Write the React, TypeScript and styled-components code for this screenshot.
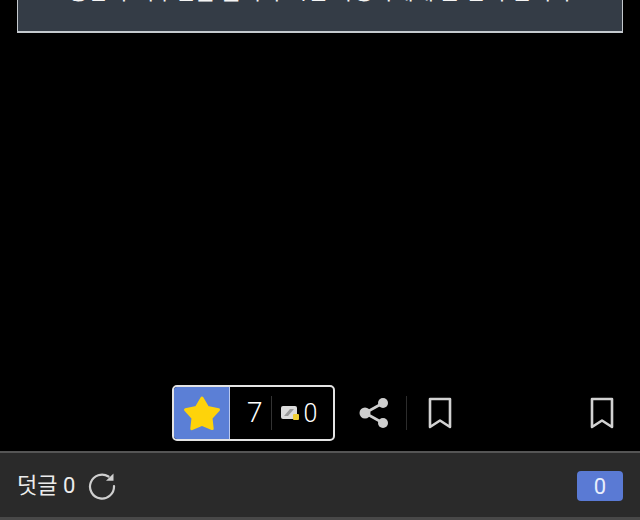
import { createGlobalStyle } from "styled-components";
import styled from "styled-components";

const Global = createGlobalStyle`
  html, body {
    margin: 0;
    padding: 0;
    background: #000;
  }
  body {
    font-family: Roboto, "Noto Sans CJK KR", sans-serif;
    overflow: hidden;
  }
`;

const Page = styled.div`
  width: 640px;
  height: 520px;
  display: flex;
  flex-direction: column;
  overflow: hidden;
  background: #000;
`;

const Notice = styled.div`
  height: 33px;
  margin: 0 17px;
  box-sizing: border-box;
  border: 1px solid #c4c9ce;
  border-bottom-width: 2px;
  border-top: none;
  background: #343c46;
  display: flex;
  align-items: flex-end;
  justify-content: center;
  padding-bottom: 24px;
  color: #f4f4f4;
  font-size: 22px;
  line-height: 30px;
  white-space: nowrap;
  overflow: hidden;
`;

const Actions = styled.div`
  margin-top: auto;
  margin-bottom: 10px;
  height: 56px;
  display: flex;
  align-items: center;
  padding: 0 26px 0 172px;
`;

const VoteBox = styled.div`
  width: 163px;
  height: 56px;
  box-sizing: border-box;
  border: 2px solid #e4e4e4;
  border-radius: 5px;
  display: flex;
  align-items: center;
  overflow: hidden;
`;

const StarCell = styled.div`
  width: 55px;
  height: 100%;
  background: #5b7fd6;
  border-right: 1px solid #b9c8ee;
  display: flex;
  align-items: center;
  justify-content: center;
`;

const VoteCount = styled.span`
  color: #fff;
  font-size: 28px;
  font-weight: 300;
  line-height: 1;
  margin-left: 17px;
`;

const VoteDivider = styled.span`
  width: 1px;
  height: 34px;
  background: #333;
  margin: 0 9px 0 8px;
`;

const PointCount = styled.span`
  color: #fff;
  font-size: 25px;
  font-weight: 300;
  line-height: 1;
  margin-left: 4px;
`;

const ShareButton = styled.div`
  display: flex;
  margin-left: 24px;
`;

const ActionDivider = styled.span`
  width: 1px;
  height: 34px;
  background: #2c2c2c;
  margin: 0 21px 0 17px;
`;

const RightMark = styled.div`
  display: flex;
  margin-left: auto;
`;

const CommentBar = styled.div`
  height: 69px;
  box-sizing: border-box;
  background: #2a2a2a;
  border-top: 2px solid #555;
  border-bottom: 3px solid #484848;
  display: flex;
  align-items: center;
  padding: 2px 17px 0;
`;

const CommentLabel = styled.span`
  color: #ececec;
  font-size: 22px;
  line-height: 1;
`;

const Refresh = styled.div`
  display: flex;
  margin-left: 13px;
`;

const CountBadge = styled.div`
  margin-left: auto;
  width: 46px;
  height: 30px;
  border-radius: 4px;
  background: #5a7ad4;
  color: #e8eefc;
  font-size: 22px;
  display: flex;
  align-items: center;
  justify-content: center;
`;

function Bookmark() {
  return (
    <svg width="24" height="32" viewBox="0 0 24 32" fill="none">
      <path
        d="M2 2H22V30L12 23.5L2 30Z"
        stroke="#d2d2d2"
        strokeWidth="2.6"
        strokeLinejoin="round"
      />
    </svg>
  );
}

function App() {
  return (
    <Page>
      <Global />
      <Notice>공감과 비추천을 눌러 주시면 작성자에게 큰 힘이 됩니다</Notice>
      <Actions>
        <VoteBox>
          <StarCell>
            <svg width="38" height="36" viewBox="0 0 38 36">
              <path
                d="M19 3L24.6 12.4L35.5 14.8L28 23L29.2 33.6L19 29.4L8.8 33.6L10 23L2.5 14.8L13.4 12.4Z"
                fill="#fed30a"
                stroke="#fed30a"
                strokeWidth="3"
                strokeLinejoin="round"
              />
            </svg>
          </StarCell>
          <VoteCount>7</VoteCount>
          <VoteDivider />
          <svg width="19" height="16" viewBox="0 0 19 16">
            <rect x="0" y="1" width="16" height="13" rx="2" fill="#dcdcdc" />
            <path d="M3 11L9 4L13 4L7 11Z" fill="#9a9a9a" />
            <rect x="12" y="9" width="6" height="6" rx="1" fill="#f0cf35" />
          </svg>
          <PointCount>0</PointCount>
        </VoteBox>
        <ShareButton>
          <svg width="30" height="32" viewBox="0 0 30 32">
            <path d="M24 6L6 16L24 26" fill="none" stroke="#cfcfcf" strokeWidth="2.6" />
            <circle cx="24" cy="6" r="5" fill="#cfcfcf" />
            <circle cx="6" cy="16" r="5.5" fill="#cfcfcf" />
            <circle cx="24" cy="26" r="5" fill="#cfcfcf" />
          </svg>
        </ShareButton>
        <ActionDivider />
        <Bookmark />
        <RightMark>
          <Bookmark />
        </RightMark>
      </Actions>
      <CommentBar>
        <CommentLabel>덧글 0</CommentLabel>
        <Refresh>
          <svg width="28" height="28" viewBox="0 0 28 28" fill="none">
            <path
              d="M20.5 4.5A12 12 0 1 0 26 14"
              stroke="#cfcfcf"
              strokeWidth="2.2"
              strokeLinecap="round"
            />
            <path d="M25.5 1.5V8.8H18Z" fill="#cfcfcf" />
          </svg>
        </Refresh>
        <CountBadge>0</CountBadge>
      </CommentBar>
    </Page>
  );
}

export default App;
